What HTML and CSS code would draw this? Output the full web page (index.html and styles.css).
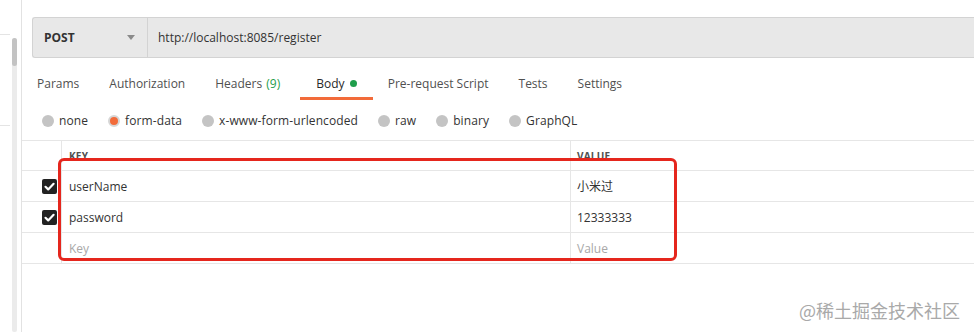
FILE: index.html
```html
<!DOCTYPE html>
<html>
<head>
<meta charset="utf-8">
<link rel="stylesheet" href="styles.css">
</head>
<body>
<div class="app">
  <aside class="sidebar">
    <div class="side-list">
      <div class="side-item first"></div>
      <div class="side-item second"></div>
    </div>
    <div class="track"><div class="thumb"></div></div>
  </aside>
  <main class="main">
    <div class="urlbar">
      <div class="method"><span class="method-name">POST</span><span class="caret"></span></div>
      <div class="url">http://localhost:8085/register</div>
    </div>
    <nav class="tabs">
      <span class="tab">Params</span>
      <span class="tab">Authorization</span>
      <span class="tab headers">Headers <span class="count">(9)</span></span>
      <span class="tab active">Body <span class="dot"></span></span>
      <span class="tab">Pre-request Script</span>
      <span class="tab">Tests</span>
      <span class="tab">Settings</span>
    </nav>
    <div class="radios">
      <span class="radio"><span class="circle"></span>none</span>
      <span class="radio"><span class="circle on"></span>form-data</span>
      <span class="radio"><span class="circle"></span>x-www-form-urlencoded</span>
      <span class="radio"><span class="circle"></span>raw</span>
      <span class="radio"><span class="circle"></span>binary</span>
      <span class="radio"><span class="circle"></span>GraphQL</span>
    </div>
    <div class="table-wrap">
      <div class="table">
        <div class="row head">
          <div class="cell chk"></div>
          <div class="cell key">KEY</div>
          <div class="cell val">VALUE</div>
        </div>
        <div class="row">
          <div class="cell chk"><span class="checkbox"><svg viewBox="0 0 15 15" width="15" height="15"><path d="M3.5 7.8 L6.2 10.4 L11.6 4.8" fill="none" stroke="#fff" stroke-width="2.2" stroke-linecap="round" stroke-linejoin="round"/></svg></span></div>
          <div class="cell key">userName</div>
          <div class="cell val">小米过</div>
        </div>
        <div class="row">
          <div class="cell chk"><span class="checkbox"><svg viewBox="0 0 15 15" width="15" height="15"><path d="M3.5 7.8 L6.2 10.4 L11.6 4.8" fill="none" stroke="#fff" stroke-width="2.2" stroke-linecap="round" stroke-linejoin="round"/></svg></span></div>
          <div class="cell key">password</div>
          <div class="cell val">12333333</div>
        </div>
        <div class="row">
          <div class="cell chk"></div>
          <div class="cell key placeholder">Key</div>
          <div class="cell val placeholder">Value</div>
        </div>
      </div>
      <div class="highlight"></div>
    </div>
    <div class="watermark">@稀土掘金技术社区</div>
  </main>
</div>
</body>
</html>
```
FILE: styles.css
```css
* { box-sizing: border-box; }
html, body { margin: 0; padding: 0; background: #fff; }
body {
  font-family: "Open Sans", "Noto Sans CJK SC", sans-serif;
  font-size: 12px;
  color: #333;
  width: 974px;
  height: 332px;
  overflow: hidden;
}
.app { display: flex; height: 332px; }

.sidebar {
  width: 22px;
  flex: none;
  display: flex;
  border-right: 1px solid #e2e2e2;
}
.side-list { width: 10px; flex: none; }
.side-item { border-bottom: 1px solid #e4e4e4; }
.side-item.first { height: 35px; }
.side-item.second { height: 91px; }
.track {
  width: 5px;
  margin-left: 2px;
  margin-top: 38px;
  background: #ebebeb;
  border-radius: 2px;
}
.thumb {
  height: 28px;
  background: #c3c3c3;
  border-radius: 3px;
}

.main {
  flex: 1;
  position: relative;
  padding-top: 17px;
}

.urlbar {
  display: flex;
  height: 41px;
  margin-left: 10px;
  background: #e8e8e8;
  border: 1px solid #d3d3d3;
  border-right: none;
  border-radius: 3px 0 0 3px;
}
.method {
  width: 115px;
  display: flex;
  align-items: center;
  justify-content: space-between;
  padding: 0 12px 0 11px;
  border-right: 1px solid #d3d3d3;
}
.method-name { font-weight: 700; color: #333; font-size: 12px; }
.caret {
  width: 0; height: 0;
  border-left: 4px solid transparent;
  border-right: 4px solid transparent;
  border-top: 5px solid #8a8a8a;
}
.url { display: flex; align-items: center; padding-left: 10px; color: #333; }

.tabs {
  display: flex;
  height: 43px;
  padding-top: 17px;
  align-items: flex-start;
}
.tab {
  padding: 0 15px;
  height: 25px;
  color: #505050;
  line-height: 18px;
}
.tab.headers { padding-right: 20px; }
.count { color: #1f9e4c; margin-left: 1px; }
.tab.active {
  color: #282828;
  border-bottom: 3px solid #f26b3a;
  padding: 0 16px;
}
.dot {
  display: inline-block;
  width: 7px; height: 7px;
  background: #1f9e4c;
  border-radius: 50%;
  margin-left: 2px;
  vertical-align: 1px;
}

.radios {
  display: flex;
  align-items: center;
  gap: 20px;
  height: 39px;
  padding-left: 20px;
  color: #333;
}
.radio { display: flex; align-items: center; gap: 5px; letter-spacing: 0.1px; }
.circle {
  width: 12px; height: 12px;
  border-radius: 50%;
  background: #c4c4c4;
}
.circle.on {
  background: #f26b3a;
  border: 2px solid #d6d6d6;
}

.table-wrap { position: relative; }
.table { border-top: 1px solid #e6e6e6; }
.row {
  display: flex;
  height: 31px;
  border-bottom: 1px solid #e6e6e6;
}
.row.head { height: 30px; }
.cell { display: flex; align-items: center; }
.chk {
  width: 40px;
  flex: none;
  justify-content: flex-end;
  padding-right: 4px;
  border-right: 1px solid #e6e6e6;
}
.key {
  width: 509px;
  flex: none;
  padding-left: 7px;
  border-right: 1px solid #e6e6e6;
}
.val { flex: 1; padding-left: 6px; }
.head .cell { font-size: 10px; font-weight: 700; color: #505050; letter-spacing: 0.2px; padding-top: 1px; }
.placeholder { color: #a8a8a8; }
.checkbox {
  width: 15px; height: 15px;
  background: #222;
  border-radius: 2px;
  display: block;
}
.checkbox svg { display: block; }

.highlight {
  position: absolute;
  left: 36px;
  top: 18px;
  width: 619px;
  height: 103px;
  border: 3px solid #e5261d;
  border-radius: 6px;
}

.watermark {
  position: absolute;
  right: 14px;
  bottom: 12px;
  font-family: "Noto Sans CJK SC", sans-serif;
  font-size: 18px;
  color: #a9a9a9;
  line-height: 20px;
}
```
